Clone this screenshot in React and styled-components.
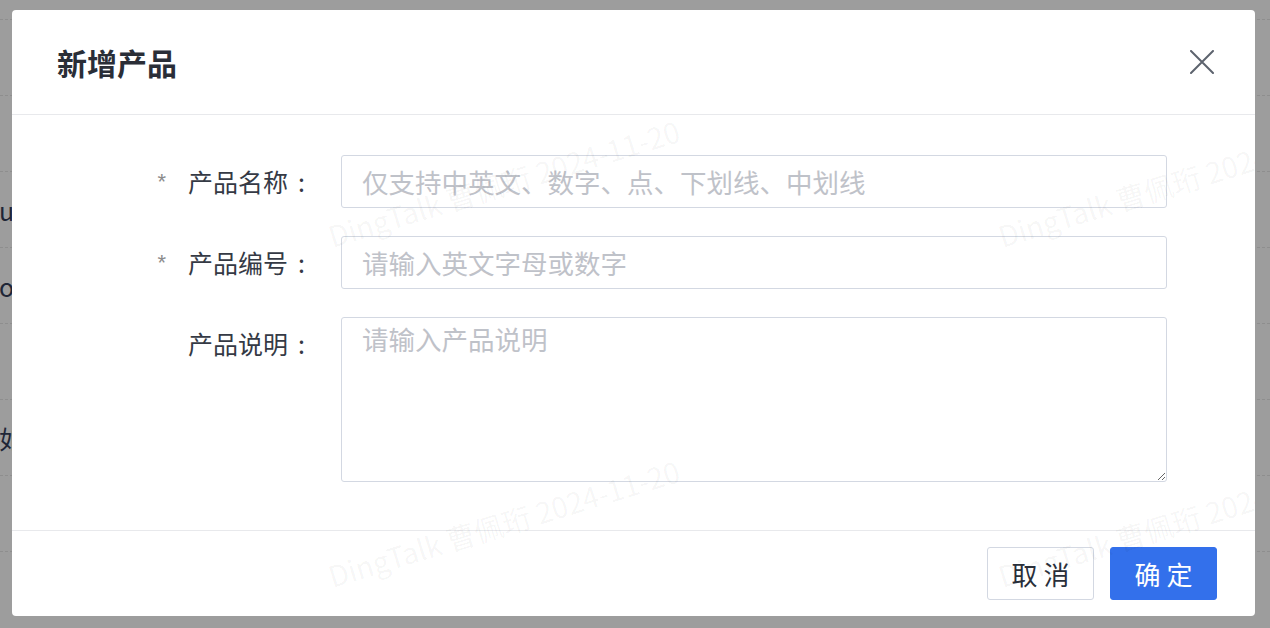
import React from 'react'
import styled, { createGlobalStyle } from 'styled-components'

const GlobalStyle = createGlobalStyle`
  html, body {
    margin: 0;
    padding: 0;
  }
  body {
    font-family: "Noto Sans CJK SC", "Noto Sans", sans-serif;
  }
  * {
    box-sizing: border-box;
  }
`;

const Page = styled.div`
  position: relative;
  width: 1270px;
  height: 628px;
  overflow: hidden;
  background: #9d9d9d;
`;

const Backdrop = styled.div`
  display: flex;
  flex-direction: column;
  padding-top: 19px;
`;

const BgRow = styled.div`
  height: 76px;
  border-top: 1px dashed #8e8e8e;
  display: flex;
  align-items: center;
  font-size: 25px;
  color: #1f2637;
  white-space: nowrap;
`;

const BgText = styled.span`
  margin-left: -1px;
`;

const Modal = styled.div`
  position: absolute;
  left: 12px;
  top: 10px;
  width: 1243px;
  background: #fff;
  border-radius: 4px;
  display: flex;
  flex-direction: column;
  z-index: 1;
`;

const Header = styled.div`
  height: 105px;
  display: flex;
  align-items: center;
  justify-content: space-between;
  padding: 0 41px 0 45px;
  border-bottom: 1px solid #e8e9ec;
`;

const Title = styled.h2`
  margin: 0;
  font-size: 30px;
  font-weight: 700;
  color: #2a2e37;
  line-height: 1;
`;

const CloseButton = styled.button`
  border: 0;
  background: none;
  padding: 0;
  width: 24px;
  height: 24px;
  display: flex;
  cursor: pointer;
  color: #5d636e;
`;

const Body = styled.div`
  display: flex;
  flex-direction: column;
  gap: 28px;
  padding: 40px 88px 48px 0;
`;

const FormRow = styled.div`
  display: flex;
  align-items: flex-start;
`;

const FieldLabel = styled.label`
  width: 293px;
  margin-right: 36px;
  flex-shrink: 0;
  text-align: right;
  line-height: 53px;
  font-size: 25px;
  color: #353a45;
  white-space: nowrap;

  &::after {
    content: ':';
    margin-left: 10px;
  }
`;

const Required = styled.span`
  display: inline-block;
  margin-right: 22px;
  font-family: "Liberation Sans", sans-serif;
  font-size: 22px;
  color: #8c8c8c;
  vertical-align: 3px;
`;

const fieldBase = `
  width: 100%;
  border: 1px solid #d3d8e2;
  border-radius: 3px;
  font-family: "Noto Sans CJK SC", "Noto Sans", sans-serif;
  font-size: 26.5px;
  color: #333;
  background: #fff;
  outline: none;
  &::placeholder {
    color: #bfc2c9;
  }
`;

const TextInput = styled.input`
  ${fieldBase}
  height: 53px;
  padding: 0 20px;
`;

const TextArea = styled.textarea`
  ${fieldBase}
  display: block;
  height: 165px;
  padding: 1px 20px;
  line-height: 1.5;
  resize: vertical;
`;

const Footer = styled.div`
  display: flex;
  justify-content: flex-end;
  gap: 16px;
  padding: 16px 38px 16px 0;
  border-top: 1px solid #e8e9ec;
`;

const Button = styled.button`
  width: 107px;
  height: 53px;
  border-radius: 3px;
  font-family: "Noto Sans CJK SC", "Noto Sans", sans-serif;
  font-size: 26px;
  cursor: pointer;
  border: 1px solid ${p => (p.$primary ? '#3370eb' : '#d3d8e2')};
  background: ${p => (p.$primary ? '#3370eb' : '#fff')};
  color: ${p => (p.$primary ? '#fff' : '#2a2f3a')};
`;

const WatermarkLayer = styled.div`
  position: absolute;
  left: 12px;
  top: 10px;
  width: 1243px;
  height: 606px;
  overflow: hidden;
  pointer-events: none;
  z-index: 2;
`;

const Mark = styled.div`
  position: absolute;
  font-size: 29px;
  line-height: 1;
  white-space: nowrap;
  color: rgba(0, 0, 0, 0.045);
  transform: rotate(-17deg);
  transform-origin: 0 100%;
`;

const CloseIcon = () => (
  <svg width="24" height="24" viewBox="0 0 24 24" fill="none">
    <path d="M1 1L23 23M23 1L1 23" stroke="currentColor" strokeWidth="2" strokeLinecap="round" />
  </svg>
)

const bgRows = ['', '', 'ueue', 'oooo', '', '如', '', '']

// start points of each watermark, page coordinates
const marks = [
  { x: 333, y: 247 },
  { x: 1003, y: 247 },
  { x: 333, y: 587 },
  { x: 1003, y: 587 },
]

const App = () => {
  return (
    <Page>
      <GlobalStyle />
      <Backdrop>
        {bgRows.map((t, i) => (
          <BgRow key={i}>
            <BgText>{t}</BgText>
          </BgRow>
        ))}
      </Backdrop>

      <Modal>
        <Header>
          <Title>新增产品</Title>
          <CloseButton aria-label="关闭">
            <CloseIcon />
          </CloseButton>
        </Header>
        <Body>
          <FormRow>
            <FieldLabel><Required>*</Required>产品名称</FieldLabel>
            <TextInput placeholder="仅支持中英文、数字、点、下划线、中划线" />
          </FormRow>
          <FormRow>
            <FieldLabel><Required>*</Required>产品编号</FieldLabel>
            <TextInput placeholder="请输入英文字母或数字" />
          </FormRow>
          <FormRow>
            <FieldLabel>产品说明</FieldLabel>
            <TextArea placeholder="请输入产品说明" />
          </FormRow>
        </Body>
        <Footer>
          <Button>取 消</Button>
          <Button $primary>确 定</Button>
        </Footer>
      </Modal>

      <WatermarkLayer>
        {marks.map((m, i) => (
          <Mark key={i} style={{ left: m.x - 12, top: m.y - 10 - 26 }}>
            DingTalk 曹佩珩 2024-11-20
          </Mark>
        ))}
      </WatermarkLayer>
    </Page>
  )
}

export default App
